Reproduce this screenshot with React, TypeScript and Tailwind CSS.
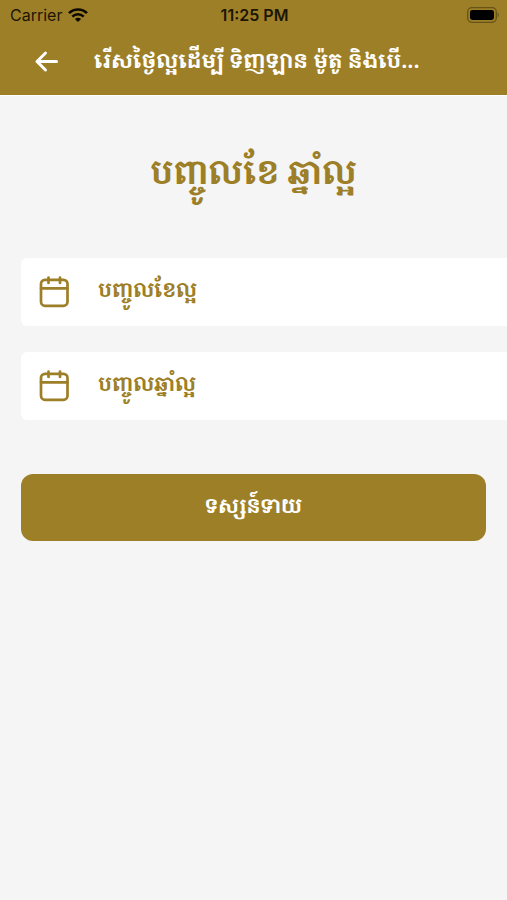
import React, { useState } from 'react';

const fields = [
  { id: 'month', label: 'បញ្ចូលខែល្អ' },
  { id: 'year', label: 'បញ្ចូលឆ្នាំល្អ' },
];

const WifiIcon = () => (
  <svg className="h-4 w-5" viewBox="0 0 20 16" fill="none" stroke="#0c0a02" strokeWidth="2.6" aria-hidden="true">
    <path d="M1 6.2C6 1.2 14 1.2 19 6.2" />
    <path d="M4.3 9.6C7.5 6.4 12.5 6.4 15.7 9.6" />
    <path d="M10 15 6.9 11.9C8.7 10.3 11.3 10.3 13.1 11.9Z" fill="#0c0a02" stroke="none" />
  </svg>
);

const BatteryIcon = () => (
  <svg className="h-4 w-8" viewBox="0 0 32 16" fill="none" aria-hidden="true">
    <rect x="0.7" y="0.7" width="28.6" height="14.6" rx="4.2" stroke="#675218" strokeWidth="1.3" />
    <rect x="3" y="3" width="24" height="10" rx="2.4" fill="#000" />
    <path d="M30.6 5.6c1.6.6 1.6 4.2 0 4.8z" fill="#675218" />
  </svg>
);

const BackIcon = () => (
  <svg className="h-6 w-6" viewBox="0 0 24 24" fill="none" stroke="#fff" strokeWidth="3" strokeLinecap="round" strokeLinejoin="round" aria-hidden="true">
    <path d="M22.5 11.5H3M11.5 3 3 11.5l8.5 8.5" />
  </svg>
);

const CalendarIcon = () => (
  <svg className="h-8 w-8 shrink-0" viewBox="0 0 32 32" fill="none" stroke="#9d7f28" strokeWidth="2.7" strokeLinecap="round" strokeLinejoin="round" aria-hidden="true">
    <rect x="3" y="3.8" width="26.5" height="26" rx="4" />
    <path d="M3 12.3h26.5M10.5 1.5v5.5M22 1.5v5.5" />
  </svg>
);

const App: React.FC = () => {
  const [values, setValues] = useState<Record<string, string>>({ month: '', year: '' });

  return (
    <div className="min-h-screen overflow-x-hidden bg-[#f5f5f5] font-['Noto_Serif_Khmer','Khmer_OS','Inter',sans-serif]">
      <header className="border-b border-white bg-[#9d7f28]">
        <div className="grid h-7 grid-cols-3 items-center pt-0.5 pr-2 pl-2.5 font-['Inter',sans-serif] text-base text-[#1c1604]">
          <div className="flex items-center gap-1.5">
            <span>Carrier</span>
            <WifiIcon />
          </div>
          <span className="text-center font-semibold">11:25 PM</span>
          <div className="flex justify-end">
            <BatteryIcon />
          </div>
        </div>
        <div className="flex h-[67px] items-center gap-9 pr-12 pl-[34px]">
          <button type="button" aria-label="ថយក្រោយ" className="shrink-0">
            <BackIcon />
          </button>
          <h1 className="truncate pb-1 text-[21px] leading-[44px] font-bold text-white">
            រើសថ្ងៃល្អដើម្បី ទិញឡាន ម៉ូតូ និងបើ...
          </h1>
        </div>
      </header>

      <main className="pt-10 pl-[21px]">
        <h2 className="pr-[21px] text-center text-[33px] leading-[72px] font-bold text-[#9d7f28]">
          បញ្ចូលខែ ឆ្នាំល្អ
        </h2>

        <form onSubmit={(e) => e.preventDefault()} className="mt-[50px]">
          <div className="flex flex-col gap-[26px]">
            {fields.map((field) => (
              <div
                key={field.id}
                className="flex h-[68px] items-center gap-7 rounded-l-md bg-white pl-[17px] text-xl font-bold text-[#9d7f28]"
              >
                <CalendarIcon />
                <div className="grid h-full flex-1 items-center pb-1">
                  {/* label sits in the same cell and hides once something is typed */}
                  <label
                    htmlFor={field.id}
                    className={values[field.id] ? 'sr-only' : 'col-start-1 row-start-1 leading-[44px]'}
                  >
                    {field.label}
                  </label>
                  <input
                    id={field.id}
                    type="text"
                    value={values[field.id]}
                    onChange={(e) => setValues({ ...values, [field.id]: e.target.value })}
                    className="col-start-1 row-start-1 h-full w-full min-w-0 bg-transparent outline-none"
                  />
                </div>
              </div>
            ))}
          </div>
          <div className="mt-[54px] pr-[21px]">
            <button
              type="submit"
              className="h-[67px] w-full rounded-xl bg-[#9d7f28] pb-1 text-xl font-bold text-white"
            >
              ទស្សន៍ទាយ
            </button>
          </div>
        </form>
      </main>
    </div>
  );
};

export default App;
